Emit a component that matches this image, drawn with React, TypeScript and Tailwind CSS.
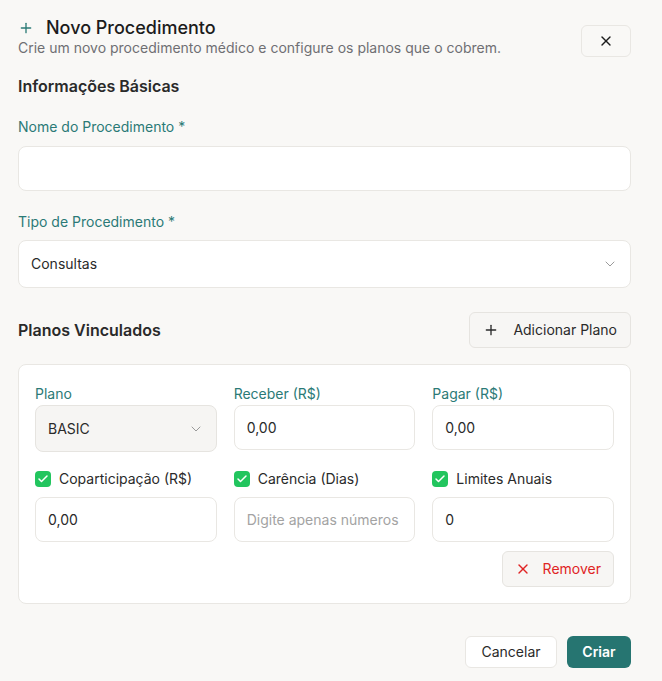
import React from 'react';
import { Plus, X, ChevronDown, Check } from 'lucide-react';

const labelClass = 'block text-sm leading-5 text-[#2b7a76]';
const inputClass =
  'w-full h-[45px] rounded-lg border border-[#e9e7e3] bg-white px-3 text-sm text-[#2a2a2a] placeholder:text-[#a3a3a3] outline-none';

const CheckLabel = ({ text }: { text: string }) => (
  <div className="flex items-center gap-2 h-5">
    <span className="w-4 h-4 rounded-[4px] bg-[#22c55e] flex items-center justify-center">
      <Check className="w-3 h-3 text-white" strokeWidth={3} />
    </span>
    <span className="text-sm text-[#2a2a2a]">{text}</span>
  </div>
);

const App = () => {
  return (
    <div
      className="min-h-screen bg-[#f9f8f6] pl-[18px] pr-[31px] pt-[17px] pb-4"
      style={{ fontFamily: 'Inter, "Noto Sans", sans-serif' }}
    >
      {/* Header */}
      <div className="flex justify-between items-start">
        <div>
          <div className="flex items-center gap-[12px] h-[21px]">
            <Plus className="w-4 h-4 text-[#2b7a76]" strokeWidth={2} />
            <h1 className="text-lg leading-[21px] font-medium text-[#1c1c1c]">Novo Procedimento</h1>
          </div>
          <p className="text-sm leading-5 text-[#6f6f73]">
            Crie um novo procedimento médico e configure os planos que o cobrem.
          </p>
        </div>
        <button className="mt-[8px] w-[50px] h-[32px] rounded-md border border-[#e9e7e3] bg-[#f9f8f6] flex items-center justify-center">
          <X className="w-4 h-4 text-[#1c1c1c]" strokeWidth={2} />
        </button>
      </div>

      {/* Basic info */}
      <h2 className="mt-[16px] text-base leading-6 font-semibold text-[#2a2a2a]">Informações Básicas</h2>

      <label className={`${labelClass} mt-[19px]`}>Nome do Procedimento *</label>
      <input className={`${inputClass} mt-[9px]`} />

      <label className={`${labelClass} mt-[21px]`}>Tipo de Procedimento *</label>
      <div className="mt-[8px] h-[48px] rounded-lg border border-[#e9e7e3] bg-white px-3 flex items-center justify-between">
        <span className="text-sm text-[#2a2a2a]">Consultas</span>
        <ChevronDown className="w-4 h-4 text-[#9a9a9a]" strokeWidth={1.5} />
      </div>

      {/* Planos */}
      <div className="mt-[24px] flex items-center justify-between">
        <h2 className="text-base leading-6 font-semibold text-[#2a2a2a]">Planos Vinculados</h2>
        <button className="h-[36px] px-[13px] rounded-md border border-[#e6e4e0] bg-[#f7f6f4] flex items-center gap-[14px] text-sm text-[#2a2a2a]">
          <Plus className="w-4 h-4" strokeWidth={2} />
          Adicionar Plano
        </button>
      </div>

      <div className="mt-[16px] rounded-lg border border-[#e9e7e3] bg-white px-4 pt-[19px] pb-4">
        <div className="grid grid-cols-3 gap-x-[17px]">
          <div>
            <label className={labelClass}>Plano</label>
            <div className="mt-[1px] h-[47px] rounded-lg border border-[#e6e4e0] bg-[#f6f5f3] px-3 flex items-center justify-between">
              <span className="text-sm text-[#2a2a2a]">BASIC</span>
              <ChevronDown className="w-4 h-4 text-[#9a9a9a]" strokeWidth={1.5} />
            </div>
          </div>
          <div>
            <label className={labelClass}>Receber (R$)</label>
            <input className={`${inputClass} mt-[1px]`} defaultValue="0,00" />
          </div>
          <div>
            <label className={labelClass}>Pagar (R$)</label>
            <input className={`${inputClass} mt-[1px]`} defaultValue="0,00" />
          </div>

          <div className="mt-[17px]">
            <CheckLabel text="Coparticipação (R$)" />
            <input className={`${inputClass} mt-[8px]`} defaultValue="0,00" />
          </div>
          <div className="mt-[17px]">
            <CheckLabel text="Carência (Dias)" />
            <input className={`${inputClass} mt-[8px]`} placeholder="Digite apenas números" />
          </div>
          <div className="mt-[17px]">
            <CheckLabel text="Limites Anuais" />
            <input className={`${inputClass} mt-[8px]`} defaultValue="0" />
          </div>
        </div>

        <div className="mt-[9px] flex justify-end">
          <button className="h-[36px] px-[12px] rounded-md border border-[#e6e4e0] bg-[#f7f6f4] flex items-center gap-[12px] text-sm text-[#e02424]">
            <X className="w-4 h-4" strokeWidth={2} />
            Remover
          </button>
        </div>
      </div>

      {/* Footer */}
      <div className="mt-[32px] flex justify-end gap-[10px]">
        <button className="h-[32px] w-[92px] rounded-md border border-[#e9e7e3] bg-white text-sm text-[#2a2a2a]">
          Cancelar
        </button>
        <button className="h-[32px] w-[64px] rounded-md bg-[#267571] text-sm font-semibold text-white">
          Criar
        </button>
      </div>
    </div>
  );
};

export default App;
